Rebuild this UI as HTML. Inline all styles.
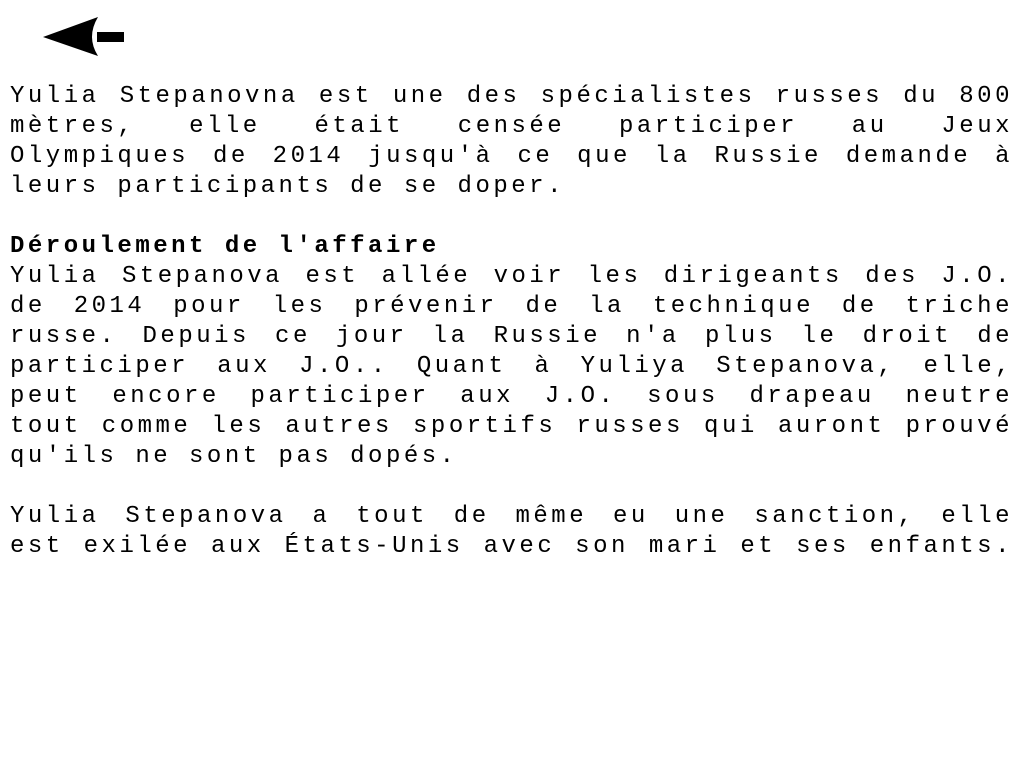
<!DOCTYPE html>
<html><head><meta charset="utf-8"><style>
html,body{margin:0;padding:0;background:#fff;width:1024px;height:768px;overflow:hidden}
.t{position:absolute;left:10px;top:82px;width:1003px;font-family:"Liberation Mono",monospace;font-size:24px;line-height:30px;letter-spacing:3.5px;color:#000}
.t div{height:30px;white-space:nowrap}
.j{text-align:justify;text-align-last:justify;white-space:normal!important}
.b{font-weight:bold}
svg{position:absolute;left:0;top:0}
</style></head><body>
<svg width="130" height="60"><path d="M43 37 L98 17 Q86 37 98 56 Z" fill="#000"/><rect x="97" y="32" width="27" height="10" fill="#000"/></svg>
<div class="t">
<div class="j">Yulia Stepanovna est une des spécialistes russes du 800</div>
<div class="j">mètres, elle était censée participer au Jeux</div>
<div class="j">Olympiques de 2014 jusqu'à ce que la Russie demande à</div>
<div>leurs participants de se doper.</div>
<div></div>
<div class="b">Déroulement de l'affaire</div>
<div class="j">Yulia Stepanova est allée voir les dirigeants des J.O.</div>
<div class="j">de 2014 pour les prévenir de la technique de triche</div>
<div class="j">russe. Depuis ce jour la Russie n'a plus le droit de</div>
<div class="j">participer aux J.O.. Quant à Yuliya Stepanova, elle,</div>
<div class="j">peut encore participer aux J.O. sous drapeau neutre</div>
<div class="j">tout comme les autres sportifs russes qui auront prouvé</div>
<div>qu'ils ne sont pas dopés.</div>
<div></div>
<div class="j">Yulia Stepanova a tout de même eu une sanction, elle</div>
<div class="j">est exilée aux États-Unis avec son mari et ses enfants.</div>
</div>
</body></html>
